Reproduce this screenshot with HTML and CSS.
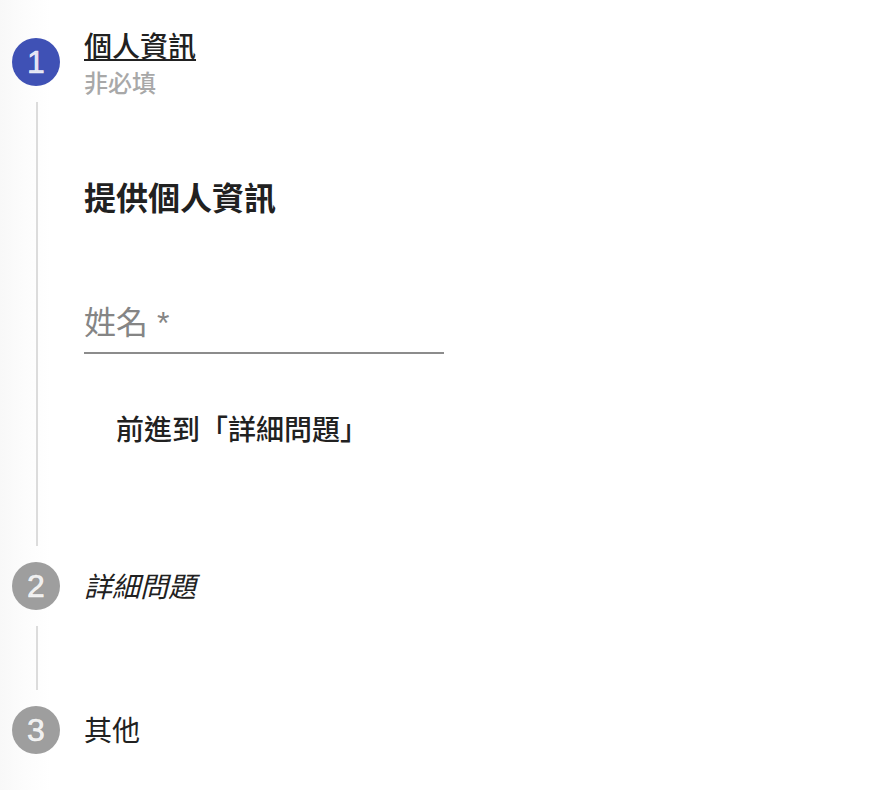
FILE: index.html
```html
<!DOCTYPE html>
<html lang="zh-Hant">
<head>
    <meta charset="UTF-8">
    <title>步驟</title>
    <link rel="stylesheet" href="styles.css">
</head>
<body>
<div class="stepper">
    <div class="step-head step-head-first">
        <span class="circle active">1</span>
        <div class="step-text">
            <div class="step-title current">個人資訊</div>
            <div class="step-sub">非必填</div>
        </div>
    </div>
    <div class="step-body first-body">
        <h2 class="body-title">提供個人資訊</h2>
        <div class="field">
            <span class="field-label">姓名 *</span>
        </div>
        <button class="next-btn" type="button">前進到「詳細問題」</button>
    </div>
    <div class="step-head">
        <span class="circle">2</span>
        <div class="step-title italic">詳細問題</div>
    </div>
    <div class="step-body empty-body"></div>
    <div class="step-head">
        <span class="circle">3</span>
        <div class="step-title">其他</div>
    </div>
</div>
</body>
</html>
```

FILE: styles.css
```css
* {
    box-sizing: border-box;
}
html, body {
    height: 100%;
}
body {
    margin: 0;
    color: #212121;
    font-family: "Liberation Sans", "Noto Sans CJK TC", sans-serif;
    background: linear-gradient(to right, #f8f8f8 0, #fcfcfc 24px, #fff 50px);
}
.stepper {
    padding: 38px 12px 0;
}
.step-head {
    display: flex;
    align-items: center;
    gap: 24px;
    height: 48px;
}
.circle {
    flex: none;
    display: flex;
    align-items: center;
    justify-content: center;
    width: 48px;
    height: 48px;
    border-radius: 50%;
    background: #9e9e9e;
    color: rgba(255, 255, 255, 0.85);
    font-size: 32px;
    -webkit-text-stroke: 0.6px rgba(255, 255, 255, 0.85);
}
.circle.active {
    background: #3f51b5;
}
.step-text {
    display: flex;
    flex-direction: column;
    margin-top: 6px;
}
.step-title {
    padding-top: 3px;
    font-size: 28px;
    line-height: 36px;
}
.step-title.current {
    padding-top: 0;
    font-weight: 500;
    text-decoration: underline;
}
.step-title.italic {
    font-style: italic;
}
.step-sub {
    margin-top: 2px;
    color: #a8a8a8;
    font-size: 24px;
    line-height: 32px;
    font-weight: 500;
}
.step-body {
    margin: 16px 0 16px 24px;
    padding-left: 46px;
    border-left: 2px solid #dcdcdc;
}
.first-body {
    height: 444px;
}
.empty-body {
    height: 64px;
}
.body-title {
    margin: 0;
    padding-top: 75px;
    font-size: 32px;
    line-height: 44px;
    font-weight: 700;
}
.field {
    display: flex;
    align-items: flex-end;
    width: 360px;
    height: 62px;
    margin-top: 71px;
    padding-bottom: 7px;
    border-bottom: 2px solid #8c8c8c;
}
.field-label {
    color: #858585;
    font-size: 32px;
    line-height: 44px;
}
.next-btn {
    display: block;
    margin: 0;
    margin-top: 49px;
    padding: 0 32px;
    border: 0;
    background: none;
    color: #212121;
    font-family: inherit;
    font-size: 28px;
    line-height: 56px;
    font-weight: 500;
}
```
